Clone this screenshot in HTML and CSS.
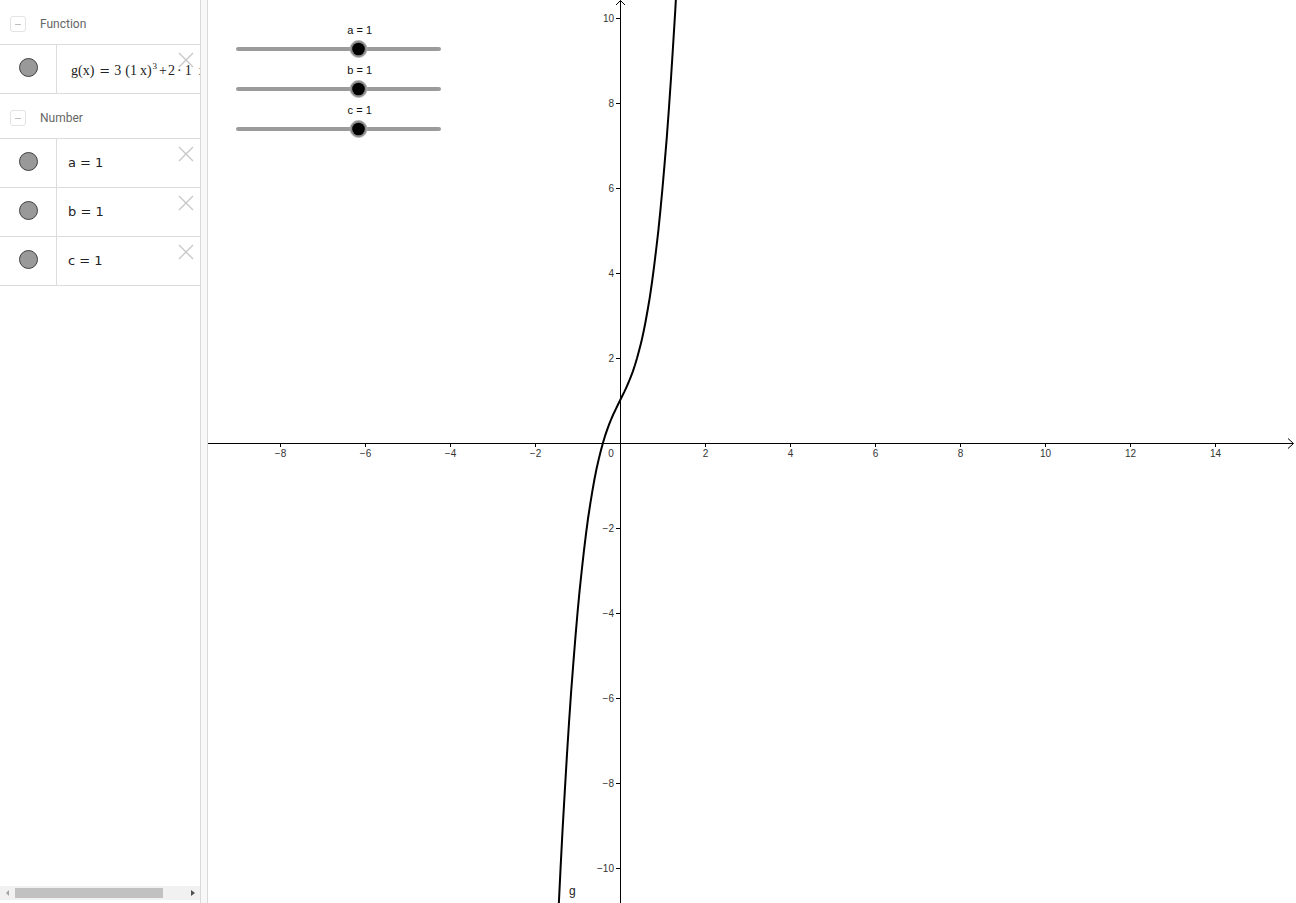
FILE: index.html
```html
<!DOCTYPE html>
<html>
<head>
<meta charset="utf-8">
<link rel="stylesheet" href="styles.css">
</head>
<body>
<div class="app">
  <aside class="algebra">
    <div class="list">
      <div class="group-head">
        <span class="collapse"><span class="dash"></span></span>
        <span class="group-title">Function</span>
      </div>
      <div class="item">
        <div class="marble-cell"><span class="marble"></span></div>
        <div class="content"><span class="formula"><span>g(x)</span><span class="eq">=</span><span>3</span><span class="gap4">(1</span><span class="gap3">x)</span><sup>3</sup><span class="plus">+</span><span class="gap2">2</span><span class="dot">·</span><span class="gap3">1</span><span class="gap5">x</span><span class="plus">+</span><span class="gap2">1</span></span></div>
        <svg class="close" viewBox="0 0 16 16"><path d="M1 1L15 15M15 1L1 15"/></svg>
      </div>
      <div class="group-head">
        <span class="collapse"><span class="dash"></span></span>
        <span class="group-title">Number</span>
      </div>
      <div class="item">
        <div class="marble-cell"><span class="marble"></span></div>
        <div class="content"><span class="value">a = 1</span></div>
        <svg class="close" viewBox="0 0 16 16"><path d="M1 1L15 15M15 1L1 15"/></svg>
      </div>
      <div class="item">
        <div class="marble-cell"><span class="marble"></span></div>
        <div class="content"><span class="value">b = 1</span></div>
        <svg class="close" viewBox="0 0 16 16"><path d="M1 1L15 15M15 1L1 15"/></svg>
      </div>
      <div class="item">
        <div class="marble-cell"><span class="marble"></span></div>
        <div class="content"><span class="value">c = 1</span></div>
        <svg class="close" viewBox="0 0 16 16"><path d="M1 1L15 15M15 1L1 15"/></svg>
      </div>
    </div>
    <div class="hscroll">
      <span class="sb-btn"><span class="tri-left"></span></span>
      <span class="sb-track"><span class="sb-thumb"></span></span>
      <span class="sb-btn"><span class="tri-right"></span></span>
    </div>
  </aside>
  <div class="splitter"></div>
  <main class="graphics">
    <svg class="canvas" width="1088" height="903" viewBox="0 0 1088 903">
      <g class="axes">
        <line x1="0" y1="443.5" x2="1085" y2="443.5"/>
        <path d="M1080 438.5L1085.5 443.5L1080 448.5" fill="none"/>
        <line x1="412.5" y1="903" x2="412.5" y2="0.5"/>
        <path d="M408 5L412.5 0.5L417 5" fill="none"/>
        <path d="M72.5 443V447M157.5 443V447M242.5 443V447M327.5 443V447M497.5 443V447M582.5 443V447M667.5 443V447M752.5 443V447M837.5 443V447M922.5 443V447M1007.5 443V447"/>
        <path d="M408 18.5H412M408 103.5H412M408 188.5H412M408 273.5H412M408 358.5H412M408 528.5H412M408 613.5H412M408 698.5H412M408 783.5H412M408 868.5H412"/>
      </g>
      <g class="xlabels">
        <text x="72.5" y="457">−8</text>
        <text x="157.5" y="457">−6</text>
        <text x="242.5" y="457">−4</text>
        <text x="327.5" y="457">−2</text>
        <text x="403" y="457">0</text>
        <text x="497.5" y="457">2</text>
        <text x="582.5" y="457">4</text>
        <text x="667.5" y="457">6</text>
        <text x="752.5" y="457">8</text>
        <text x="837.5" y="457">10</text>
        <text x="922.5" y="457">12</text>
        <text x="1007.5" y="457">14</text>
      </g>
      <g class="ylabels">
        <text x="406" y="22">10</text>
        <text x="406" y="107">8</text>
        <text x="406" y="192">6</text>
        <text x="406" y="277">4</text>
        <text x="406" y="362">2</text>
        <text x="406" y="532">−2</text>
        <text x="406" y="617">−4</text>
        <text x="406" y="702">−6</text>
        <text x="406" y="787">−8</text>
        <text x="406" y="872">−10</text>
      </g>
      <polyline class="curve" points="350.4,912.5 352.5,869.4 354.6,829.0 356.8,791.1 358.9,755.8 361,722.8 363.1,692.2 365.3,663.7 367.4,637.4 369.5,613 371.6,590.6 373.8,570.0 375.9,551.1 378,533.8 380.1,518.0 382.3,503.7 384.4,490.8 386.5,479.0 388.6,468.5 390.8,458.9 392.9,450.4 395,442.7 397.1,435.7 399.3,429.4 401.4,423.7 403.5,418.5 405.6,413.7 407.8,409.1 409.9,404.8 412,400.5 414.1,396.2 416.3,391.9 418.4,387.3 420.5,382.5 422.6,377.3 424.8,371.6 426.9,365.3 429,358.3 431.1,350.6 433.3,342.1 435.4,332.5 437.5,322.0 439.6,310.2 441.8,297.3 443.9,283.0 446,267.2 448.1,250.0 450.3,231.1 452.4,210.4 454.5,188 456.6,163.7 458.8,137.3 460.9,108.8 463,78.2 465.1,45.2 467.3,9.9 469.4,-28.0"/>
      <text class="fname" x="361" y="895">g</text>
      <g class="slider">
        <text class="slabel" x="151.7" y="34">a = 1</text>
        <line class="strack" x1="30" y1="49" x2="231" y2="49"/>
        <circle class="ring" cx="150.5" cy="49" r="8.5"/>
        <circle class="knob" cx="150.5" cy="49" r="6.3"/>
      </g>
      <g class="slider">
        <text class="slabel" x="151.7" y="74">b = 1</text>
        <line class="strack" x1="30" y1="89" x2="231" y2="89"/>
        <circle class="ring" cx="150.5" cy="89" r="8.5"/>
        <circle class="knob" cx="150.5" cy="89" r="6.3"/>
      </g>
      <g class="slider">
        <text class="slabel" x="151.7" y="114">c = 1</text>
        <line class="strack" x1="30" y1="129" x2="231" y2="129"/>
        <circle class="ring" cx="150.5" cy="129" r="8.5"/>
        <circle class="knob" cx="150.5" cy="129" r="6.3"/>
      </g>
    </svg>
  </main>
</div>
</body>
</html>
```
FILE: styles.css
```css
html, body {
  margin: 0;
  padding: 0;
  background: #fff;
  overflow: hidden;
}
.app {
  display: flex;
  width: 1296px;
  height: 903px;
}
.algebra {
  width: 200px;
  flex: none;
  display: flex;
  flex-direction: column;
  background: #fff;
  overflow: hidden;
}
.list {
  flex: 1;
}
.group-head {
  height: 40px;
  padding-top: 4px;
  border-bottom: 1px solid #dcdcdc;
  display: flex;
  align-items: center;
  box-sizing: content-box;
}
.collapse {
  width: 14px;
  height: 14px;
  margin-left: 10px;
  border: 1px solid #e3e3e3;
  border-radius: 3px;
  display: flex;
  align-items: center;
  justify-content: center;
}
.dash {
  width: 6px;
  height: 1px;
  background: #bdbdbd;
}
.group-title {
  margin-left: 14px;
  font-family: Roboto, "Liberation Sans", sans-serif;
  font-size: 12px;
  color: #666;
}
.item {
  position: relative;
  height: 48px;
  border-bottom: 1px solid #dcdcdc;
  display: flex;
}
.marble-cell {
  width: 56px;
  flex: none;
  border-right: 1px solid #dcdcdc;
  display: flex;
  align-items: center;
  justify-content: center;
}
.marble {
  width: 17px;
  height: 17px;
  margin-bottom: 3px;
  border: 1px solid #404040;
  border-radius: 50%;
  background: #999;
}
.content {
  flex: 1;
  overflow: hidden;
  white-space: nowrap;
  display: flex;
  align-items: center;
  padding-left: 12px;
}
.formula {
  display: flex;
  align-items: baseline;
  font-family: "Liberation Serif", "DejaVu Serif", serif;
  font-size: 14px;
  color: #222;
  margin-top: 4px;
  padding-left: 2px;
}
.formula .eq {
  font-family: "DejaVu Sans", sans-serif;
  font-size: 13px;
  margin: 0 4px 0 5px;
}
.formula .gap4 { margin-left: 4px; }
.formula .gap3 { margin-left: 3px; }
.formula .gap2 { margin-left: 1px; }
.formula .gap5 { margin-left: 7px; }
.formula .plus { margin-left: 2px; }
.formula .dot { margin-left: 2px; }
.formula sup {
  font-size: 9px;
  position: relative;
  top: -6px;
  margin-left: 1px;
  line-height: 0;
}
.value {
  font-family: "DejaVu Sans", sans-serif;
  font-size: 13px;
  color: #222;
  margin-bottom: 1px;
  margin-left: -1px;
}
.close {
  position: absolute;
  top: 7px;
  right: 6px;
  width: 16px;
  height: 16px;
  fill: none;
  stroke: #c6c6c6;
  stroke-width: 1.3;
}
.hscroll {
  height: 14px;
  margin-bottom: 3px;
  background: #f1f1f1;
  display: flex;
  align-items: center;
}
.sb-btn {
  width: 15px;
  height: 14px;
  flex: none;
  display: flex;
  align-items: center;
  justify-content: center;
}
.tri-left {
  width: 0;
  height: 0;
  border-top: 3px solid transparent;
  border-bottom: 3px solid transparent;
  border-right: 3px solid #a3a3a3;
}
.tri-right {
  width: 0;
  height: 0;
  margin-left: 1px;
  border-top: 3.5px solid transparent;
  border-bottom: 3.5px solid transparent;
  border-left: 4px solid #505050;
}
.sb-track {
  flex: 1;
  height: 14px;
  display: flex;
  align-items: center;
}
.sb-thumb {
  width: 148px;
  height: 10px;
  background: #c1c1c1;
}
.splitter {
  width: 6px;
  flex: none;
  background: #f8f8f8;
  border-left: 1px solid #dadada;
  border-right: 1px solid #dadada;
}
.graphics {
  flex: 1;
  position: relative;
  overflow: hidden;
  background: #fff;
}
.canvas {
  display: block;
}
.axes line, .axes path {
  stroke: #000;
  stroke-width: 1;
}
.xlabels text, .ylabels text {
  font-family: "Liberation Sans", Arial, sans-serif;
  font-size: 10px;
  fill: #333;
}
.xlabels text {
  text-anchor: middle;
}
.ylabels text {
  text-anchor: end;
}
.curve {
  fill: none;
  stroke: #000;
  stroke-width: 2;
  stroke-linejoin: round;
}
.fname {
  font-family: "Liberation Sans", Arial, sans-serif;
  font-size: 12px;
  fill: #222;
}
.slabel {
  font-family: "Liberation Sans", Arial, sans-serif;
  font-size: 11px;
  fill: #111;
  text-anchor: middle;
}
.strack {
  stroke: #9b9b9b;
  stroke-width: 4;
  stroke-linecap: round;
}
.ring {
  fill: #8a8a8a;
  stroke: #b0b0b0;
  stroke-width: 0.8;
}
.knob {
  fill: #000;
}
```
